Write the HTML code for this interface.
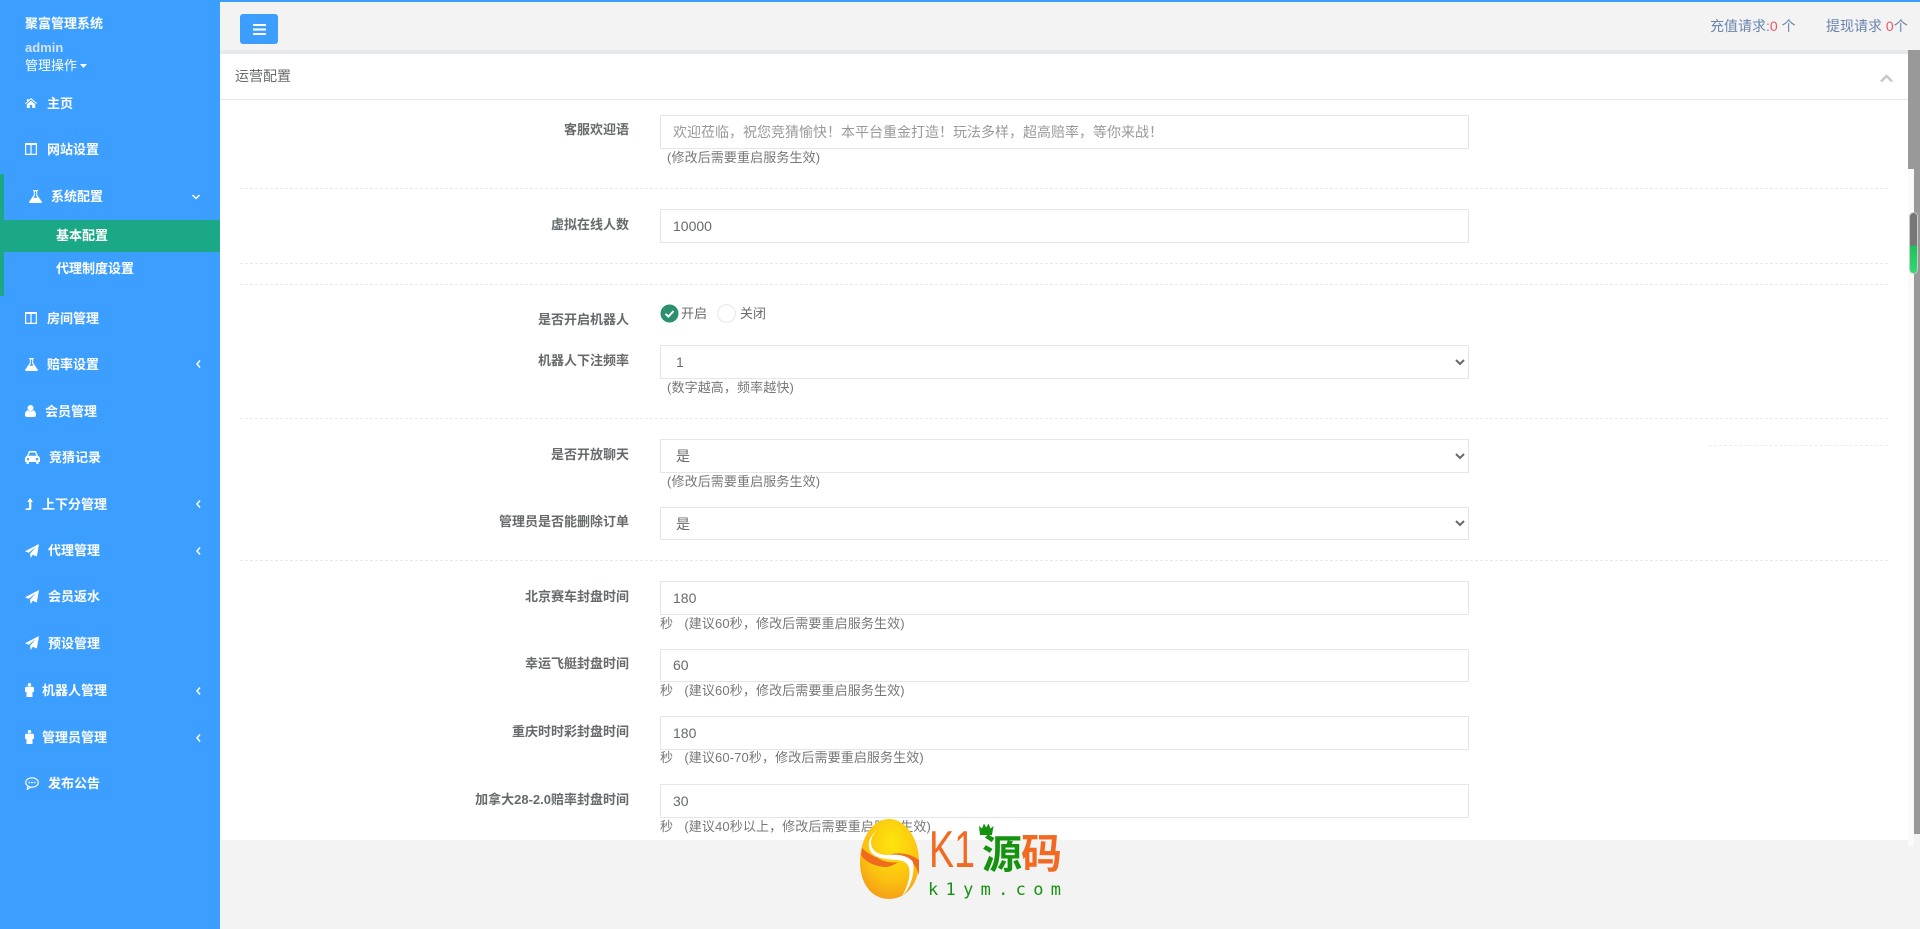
<!DOCTYPE html>
<html lang="zh-CN">
<head>
<meta charset="utf-8">
<title>聚富管理系统</title>
<style>
*{box-sizing:border-box}
html{margin:0;padding:0;width:1920px;height:929px;overflow:hidden;background:#f3f3f4}
body{margin:0;padding:0;width:1920px;height:929px;overflow:hidden;background:#f3f3f4;font-family:"Liberation Sans","Noto Sans CJK SC",sans-serif;font-size:13px;color:#676a6c;filter:blur(.35px)}
.a{position:absolute}
#side{position:absolute;left:0;top:0;width:220px;height:929px;background:#3c9fff;color:#fff}
.n{position:absolute;height:20px;line-height:20px;font-size:13px;font-weight:700;color:#fff;white-space:nowrap;transform:translateY(1px)}
.i{position:absolute;fill:#fff}
.chev{position:absolute;left:194px;width:10px;height:12px;fill:none;stroke:#fff;stroke-width:1.5}
.hr{position:absolute;left:240px;width:1648px;height:0;border-top:1px dashed #e7eaec}
.lb{position:absolute;right:1291px;height:20px;line-height:20px;font-weight:700;font-size:13px;color:#676a6c;white-space:nowrap;transform:translateY(1px)}
.ctl{position:absolute;left:660px;width:809px;height:34px;border:1px solid #e5e6e7;background:#fff;color:#676a6c;font-family:inherit;font-size:14px;padding:0 12px;border-radius:0;outline:0;margin:0}
.ctl::placeholder{color:#999;opacity:1}
select.ctl{padding:0 11px;height:33px}
.h{position:absolute;height:18px;line-height:18px;font-size:13px;color:#777;white-space:nowrap;letter-spacing:.12px}
</style>
</head>
<body>
<!-- main -->
<div class="a" style="left:220px;top:0;width:1700px;height:2px;background:#3c9fff"></div>
<div class="a" style="left:220px;top:2px;width:1700px;height:48px;background:#f3f3f4"></div>
<div class="a" style="left:220px;top:50px;width:1700px;height:4px;background:#e7eaec"></div>
<div class="a" style="left:240px;top:14px;width:38px;height:30px;background:#3c9fff;border-radius:3px">
  <svg class="a" style="left:13px;top:10px" width="13" height="11" viewBox="0 0 13 11"><path d="M0 0h13v2H0zM0 4.500h13v2H0zM0 9h13v2H0z" fill="#fff"/></svg>
</div>
<div class="a" style="left:1710px;top:16px;font-size:14px;line-height:20px;color:#6a84ad;white-space:nowrap">充值请求:<span style="color:#ed5565">0</span> 个</div>
<div class="a" style="left:1826px;top:16px;font-size:14px;line-height:20px;color:#6a84ad;white-space:nowrap">提现请求 <span style="color:#ed5565">0</span>个</div>

<!-- panel -->
<div class="a" style="left:220px;top:54px;width:1688px;height:786px;background:#fff"></div>
<div class="a" style="left:220px;top:99px;width:1688px;height:1px;background:#e7eaec"></div>
<div class="a" style="left:235px;top:66px;font-size:14px;line-height:20px;color:#676a6c">运营配置</div>
<svg class="a" style="left:1880px;top:74px" width="13" height="9" viewBox="0 0 13 9"><path d="M1 7.500 6.500 2 12 7.500" fill="none" stroke="#c9c9c9" stroke-width="2.600"/></svg>

<!-- scrollbars -->
<div class="a" style="left:1908px;top:50px;width:12px;height:119px;background:#999"></div>
<div class="a" style="left:1908px;top:169px;width:6px;height:677px;background:#fafafa"></div>
<div class="a" style="left:1914px;top:169px;width:6px;height:665px;background:#999"></div>
<div class="a" style="left:1910px;top:213px;width:7px;height:60px;border-radius:4px;background:linear-gradient(#777 0,#777 54%,#1fc05c 55%,#2fdc70 100%);box-shadow:0 0 0 1px #ccc"></div>

<!-- form -->
<div class="lb" style="top:119px">客服欢迎语</div>
<input class="ctl" style="top:115px" placeholder="欢迎莅临，祝您竞猜愉快！本平台重金打造！玩法多样，超高赔率，等你来战！">
<div class="h" style="left:667px;top:149px">(修改后需要重启服务生效)</div>
<div class="hr" style="top:188px"></div>

<div class="lb" style="top:214px">虚拟在线人数</div>
<input class="ctl" style="top:209px" value="10000">
<div class="hr" style="top:263px"></div>
<div class="hr" style="top:284px"></div>

<div class="lb" style="top:309px">是否开启机器人</div>
<svg class="a" style="left:660px;top:304px" width="19" height="19" viewBox="0 0 19 19"><circle cx="9.500" cy="9.500" r="9" fill="#2c8f70"/><path d="M5.500 9.800 8.400 12.600 13.600 7" fill="none" stroke="#fff" stroke-width="2"/></svg>
<div class="a" style="left:681px;top:304px;line-height:20px;font-size:13px">开启</div>
<svg class="a" style="left:717px;top:304px" width="19" height="19" viewBox="0 0 19 19"><circle cx="9.500" cy="9.500" r="8.800" fill="#fff" stroke="#e5e6e7"/></svg>
<div class="a" style="left:740px;top:304px;line-height:20px;font-size:13px">关闭</div>

<div class="lb" style="top:350px">机器人下注频率</div>
<select class="ctl" style="top:345px;height:34px"><option>1</option></select>
<div class="h" style="left:667px;top:379px">(数字越高，频率越快)</div>
<div class="hr" style="top:418px"></div>

<div class="lb" style="top:444px">是否开放聊天</div>
<select class="ctl" style="top:439px;height:34px"><option>是</option></select>
<div class="h" style="left:667px;top:473px">(修改后需要重启服务生效)</div>
<div class="a" style="left:1709px;top:445px;width:179px;border-top:1px dashed #eceef0"></div>

<div class="lb" style="top:511px">管理员是否能删除订单</div>
<select class="ctl" style="top:507px"><option>是</option></select>
<div class="hr" style="top:560px"></div>

<div class="lb" style="top:586px">北京赛车封盘时间</div>
<input class="ctl" style="top:581px" value="180">
<div class="h" style="left:660px;top:615px">秒 &nbsp;&nbsp;(建议60秒，修改后需要重启服务生效)</div>

<div class="lb" style="top:653px">幸运飞艇封盘时间</div>
<input class="ctl" style="top:649px;height:33px;padding-bottom:2px" value="60">
<div class="h" style="left:660px;top:682px">秒 &nbsp;&nbsp;(建议60秒，修改后需要重启服务生效)</div>

<div class="lb" style="top:721px">重庆时时彩封盘时间</div>
<input class="ctl" style="top:716px" value="180">
<div class="h" style="left:660px;top:749px">秒 &nbsp;&nbsp;(建议60-70秒，修改后需要重启服务生效)</div>

<div class="lb" style="top:789px">加拿大28-2.0赔率封盘时间</div>
<input class="ctl" style="top:784px" value="30">
<div class="h" style="left:660px;top:818px">秒 &nbsp;&nbsp;(建议40秒以上，修改后需要重启服务生效)</div>

<!-- sidebar -->
<div id="side">
  <div class="n" style="left:25px;top:13px">聚富管理系统</div>
  <div class="n" style="left:25px;top:37px;color:#d3e4f7">admin</div>
  <div class="n" style="left:25px;top:55px;font-weight:400">管理操作</div>
  <svg class="a" style="left:80px;top:64px" width="7" height="4" viewBox="0 0 7 4"><path d="M0 0h7L3.500 4z" fill="#fff"/></svg>

  <svg class="i" style="left:25px;top:98px" width="12" height="10" viewBox="0 0 12 10"><path d="M6 0 3.500 2.200V1H2v2.500L0 5.300l.7.700L6 1.400 11.300 6l.7-.7zM6 2.600 1.800 6.200V10h3V7h2.400v3h3V6.200z"/></svg>
  <div class="n" style="left:47px;top:93px">主页</div>

  <svg class="i" style="left:25px;top:143px" width="12" height="12" viewBox="0 0 12 12"><path fill-rule="evenodd" d="M0 0h12v12H0zM1.200 2v8.800h4.200V2zM6.600 2v8.800h4.200V2z"/></svg>
  <div class="n" style="left:47px;top:139px">网站设置</div>

  <div class="a" style="left:0;top:174px;width:4px;height:122px;background:#1aa886"></div>
  <svg class="i" style="left:29px;top:190px" width="13" height="13" viewBox="0 0 13 13"><path fill-rule="evenodd" d="M4 0h5v1H8.200v4L13 12l-.6 1H.6L0 12l4.800-7V1H4zM5.800 1.500v4.300L4.500 7.800h4L7.200 5.800V1.500z"/></svg>
  <div class="n" style="left:51px;top:186px">系统配置</div>
  <svg class="chev" style="left:191px;top:191px" viewBox="0 0 10 12"><path d="M1.500 4 5 7.500 8.500 4"/></svg>

  <div class="a" style="left:4px;top:220px;width:216px;height:32px;background:#1aa886"></div>
  <div class="n" style="left:56px;top:225px">基本配置</div>
  <div class="n" style="left:56px;top:258px">代理制度设置</div>

  <svg class="i" style="left:25px;top:312px" width="12" height="12" viewBox="0 0 12 12"><path fill-rule="evenodd" d="M0 0h12v12H0zM1.200 2v8.800h4.200V2zM6.600 2v8.800h4.200V2z"/></svg>
  <div class="n" style="left:47px;top:308px">房间管理</div>

  <svg class="i" style="left:25px;top:358px" width="13" height="13" viewBox="0 0 13 13"><path fill-rule="evenodd" d="M4 0h5v1H8.200v4L13 12l-.6 1H.6L0 12l4.800-7V1H4zM5.800 1.500v4.300L4.500 7.800h4L7.200 5.800V1.500z"/></svg>
  <div class="n" style="left:47px;top:354px">赔率设置</div>
  <svg class="chev" style="top:358px" viewBox="0 0 10 12"><path d="M6 2.500 3 6l3 3.500"/></svg>

  <svg class="i" style="left:25px;top:405px" width="11" height="12" viewBox="0 0 11 12"><circle cx="5.500" cy="3" r="3"/><path d="M0 10c0-3 1.200-4.500 2.800-4.800C3.500 6 4.500 6.300 5.500 6.300S7.500 6 8.200 5.200C9.800 5.500 11 7 11 10c0 1.300-.8 2-2 2H2c-1.200 0-2-.7-2-2z"/></svg>
  <div class="n" style="left:45px;top:401px">会员管理</div>

  <svg class="i" style="left:25px;top:451px" width="15" height="13" viewBox="0 0 15 13"><path fill-rule="evenodd" d="M4 0h7l2 5c1.200.4 2 1.300 2 2.500V11h-1.500v2h-2.300v-2H3.800v2H1.500v-2H0V7.500C0 6.300.8 5.400 2 5zM4.800 1.500 3.600 4.800h7.800l-1.200-3.300zM3 7a1.200 1.200 0 1 0 0 2.400A1.200 1.200 0 0 0 3 7zm9 0a1.200 1.200 0 1 0 0 2.400A1.200 1.200 0 0 0 12 7z"/></svg>
  <div class="n" style="left:49px;top:447px">竞猜记录</div>

  <svg class="i" style="left:25px;top:498px" width="8" height="12" viewBox="0 0 8 12"><path d="M5 0 8 4H6.300v6.500c0 .9-.6 1.500-1.500 1.500H0l1.300-1.800h2.800V4H2.300z"/></svg>
  <div class="n" style="left:42px;top:494px">上下分管理</div>
  <svg class="chev" style="top:498px" viewBox="0 0 10 12"><path d="M6 2.500 3 6l3 3.500"/></svg>

  <svg class="i" style="left:25px;top:544px" width="14" height="14" viewBox="0 0 14 14"><path d="M14 0 11.800 12.500 7.800 10.800 5.800 14 5 9.800 11 3 3.800 8.700 0 7.200z"/></svg>
  <div class="n" style="left:48px;top:540px">代理管理</div>
  <svg class="chev" style="top:545px" viewBox="0 0 10 12"><path d="M6 2.500 3 6l3 3.500"/></svg>

  <svg class="i" style="left:25px;top:590px" width="14" height="14" viewBox="0 0 14 14"><path d="M14 0 11.800 12.500 7.800 10.800 5.800 14 5 9.800 11 3 3.800 8.700 0 7.200z"/></svg>
  <div class="n" style="left:48px;top:586px">会员返水</div>

  <svg class="i" style="left:25px;top:636px" width="14" height="14" viewBox="0 0 14 14"><path d="M14 0 11.800 12.500 7.800 10.800 5.800 14 5 9.800 11 3 3.800 8.700 0 7.200z"/></svg>
  <div class="n" style="left:48px;top:633px">预设管理</div>

  <svg class="i" style="left:25px;top:683px" width="9" height="14" viewBox="0 0 9 14"><circle cx="4.500" cy="1.700" r="1.700"/><path d="M1.500 3.700h6c.9 0 1.500.6 1.500 1.500V9H7.500v5h-6V9H0V5.200c0-.9.600-1.500 1.500-1.500z"/></svg>
  <div class="n" style="left:42px;top:680px">机器人管理</div>
  <svg class="chev" style="top:685px" viewBox="0 0 10 12"><path d="M6 2.500 3 6l3 3.500"/></svg>

  <svg class="i" style="left:25px;top:730px" width="9" height="14" viewBox="0 0 9 14"><circle cx="4.500" cy="1.700" r="1.700"/><path d="M1.500 3.700h6c.9 0 1.500.6 1.500 1.500V9H7.500v5h-6V9H0V5.200c0-.9.600-1.500 1.500-1.500z"/></svg>
  <div class="n" style="left:42px;top:727px">管理员管理</div>
  <svg class="chev" style="top:732px" viewBox="0 0 10 12"><path d="M6 2.500 3 6l3 3.500"/></svg>

  <svg class="a" style="left:25px;top:777px" width="14" height="13" viewBox="0 0 14 13"><ellipse cx="7" cy="5.500" rx="6.300" ry="4.700" fill="none" stroke="#fff" stroke-width="1.100"/><path d="M3 9 2.300 12.300 6 10" fill="none" stroke="#fff" stroke-width="1.100"/><circle cx="4.300" cy="5.500" r=".9" fill="#fff"/><circle cx="7" cy="5.500" r=".9" fill="#fff"/><circle cx="9.700" cy="5.500" r=".9" fill="#fff"/></svg>
  <div class="n" style="left:48px;top:773px">发布公告</div>
</div>

<!-- watermark -->
<svg class="a" style="left:850px;top:810px" width="230" height="100" viewBox="850 810 230 100">
  <defs>
    <radialGradient id="g" cx=".55" cy=".3" r=".75"><stop offset="0" stop-color="#fde60e"/><stop offset=".65" stop-color="#fbc00f"/><stop offset="1" stop-color="#f49a1a"/></radialGradient>
  </defs>
  <path d="M889 819c17 0 30 20 30 43 0 22-13 37-30 37s-29-15-29-37c0-23 12-43 29-43z" fill="url(#g)"/>
  <path d="M861 855C864 860 872 866 885 867 891 867 895 864 898 862 890 863 884 862 878 858 870 855 865 851 862 848Z" fill="#ee6a1c"/>
  <path d="M889 855C897 852 910 853 919 860L919 875C917 868 914 862 906 860 901 857 895 856 889 855Z" fill="#ee6a1c"/>
  <path d="M877 830C867 838 865 852 878 857 888 861 900 858 906 863 912 868 910 883 902 896 911 888 915 872 913 862 908 855 897 854 887 855 878 855 871 850 871 843 871 838 873 834 877 830Z" fill="#fff"/>
  <text x="929" y="867" font-family="Liberation Sans,sans-serif" font-size="52" fill="#f26a22" textLength="46" lengthAdjust="spacingAndGlyphs">K1</text>
  <text x="982" y="868" font-family="Noto Sans CJK SC,sans-serif" font-weight="700" font-size="40" fill="#15930f">源</text>
  <text x="1021" y="868" font-family="Noto Sans CJK SC,sans-serif" font-weight="700" font-size="41" fill="#f26a22">码</text>
  <path d="M980 835h12l1.500-9-3 2.500-2-5-2.300 4-2.200-4-2 5-3-2.500z" fill="#15930f"/>
  <text x="928" y="895" font-family="DejaVu Sans Mono,monospace" font-size="17" fill="#15930f" textLength="133">k1ym.com</text>
</svg>
</body>
</html>
